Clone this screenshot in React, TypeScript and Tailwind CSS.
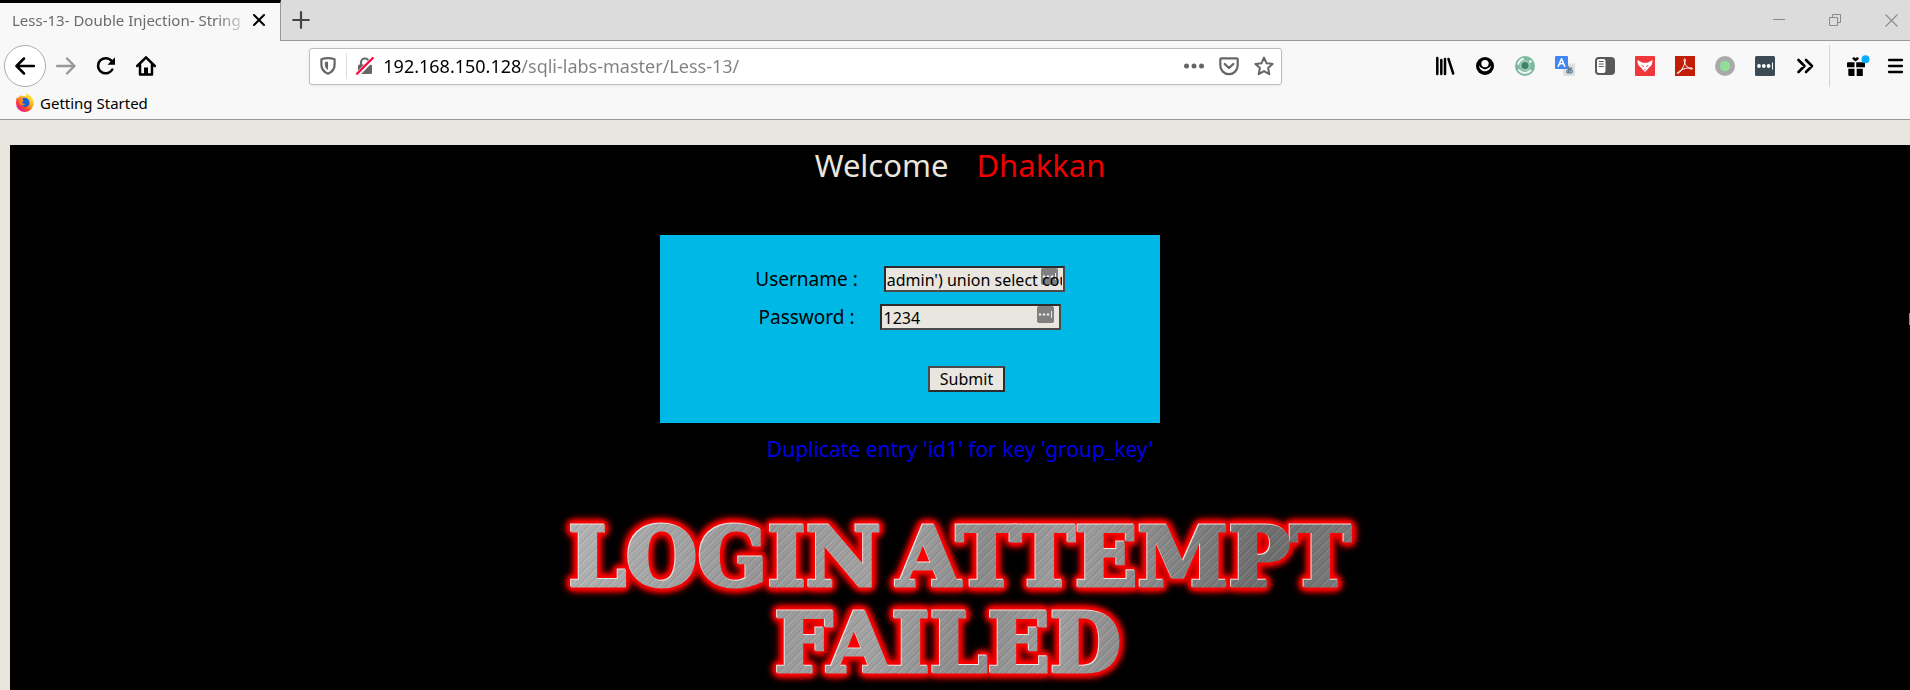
import type { ReactNode } from "react";

const ui = "font-['Noto_Sans','Open_Sans',sans-serif]";

function Icon({ children, size = 20, label }: { children: ReactNode; size?: number; label?: string }) {
  return (
    <svg
      width={size}
      height={size}
      viewBox="0 0 20 20"
      fill="none"
      strokeLinecap="round"
      strokeLinejoin="round"
      aria-label={label}
      aria-hidden={label ? undefined : true}
      className="shrink-0"
    >
      {children}
    </svg>
  );
}

function ToolButton({ label, children }: { label: string; children: ReactNode }) {
  return (
    <button type="button" aria-label={label} className="flex h-10 w-10 shrink-0 items-center justify-center">
      {children}
    </button>
  );
}

function TabStrip() {
  return (
    <div className="flex h-[41px] bg-[#dcdcdc]">
      <div className="flex w-[281px] shrink-0 items-center border-t-[3px] border-r border-t-black border-r-[#999] bg-[#f8f8f8] pb-1 pl-3">
        <span className="w-[236px] overflow-hidden text-[15px] leading-5 whitespace-nowrap text-[#6b6b6b] [mask-image:linear-gradient(to_right,black_205px,transparent_238px)]">
          Less-13- Double Injection- String
        </span>
        <button type="button" aria-label="Close tab" className="ml-[5px] flex h-5 w-3 items-center justify-center">
          <svg width="12" height="12" viewBox="0 0 12 12" stroke="#000" strokeWidth="2" strokeLinecap="round" className="shrink-0">
            <path d="M1 1l10 10M11 1L1 11" />
          </svg>
        </button>
      </div>
      <div className="flex flex-1 items-center border-b border-[#999]">
        <button type="button" aria-label="New tab" className="flex h-10 w-10 items-center justify-center">
          <svg width="18" height="18" viewBox="0 0 18 18" stroke="#444" strokeWidth="2.2" strokeLinecap="round">
            <path d="M9 1.2v15.600M1.200 9h15.600" />
          </svg>
        </button>
        <div className="ml-auto flex items-center gap-11 pr-3 text-[#8a8a8a]">
          <button type="button" aria-label="Minimize">
            <svg width="12" height="12" viewBox="0 0 12 12" stroke="currentColor">
              <path d="M0 5.500h12" />
            </svg>
          </button>
          <button type="button" aria-label="Restore">
            <svg width="12" height="12" viewBox="0 0 12 12" fill="none" stroke="currentColor">
              <path d="M.5 3.500h8v8h-8zM3.500 3.500v-3h8v8h-3" />
            </svg>
          </button>
          <button type="button" aria-label="Close">
            <svg width="13" height="13" viewBox="0 0 13 13" stroke="currentColor" strokeWidth="1.100">
              <path d="M.5.5l12 12M12.500.5l-12 12" />
            </svg>
          </button>
        </div>
      </div>
    </div>
  );
}

function AddressBar() {
  return (
    <div className="flex h-[37px] flex-[20] items-center rounded-[3px] border border-[#bdbdbd] bg-white pr-[7px] pl-2 text-[#666] shadow-[0_1px_4px_rgba(0,0,0,0.06)]">
      <Icon label="Tracking protection">
        <path d="M10 2.200c2.400 0 4.700.4 6.600 1v5.600c0 4.200-2.400 7.200-6.600 9-4.200-1.800-6.600-4.800-6.600-9V3.200c1.900-.6 4.200-1 6.600-1z" stroke="#666" strokeWidth="2.200" />
        <path d="M10 5.800v8.200c-2-1.200-3.100-2.900-3.100-5.300V6.200c1-.3 2-.4 3.100-.4z" fill="#666" />
      </Icon>
      <span className="mx-2 h-[26px] w-px bg-[#dedede]" />
      <Icon label="Connection is not secure">
        <path d="M6 9V6.500a4 4 0 0 1 8 0V9" stroke="#666" strokeWidth="2.200" />
        <rect x="3" y="8.500" width="14" height="9.500" rx="1.500" fill="#666" />
        <path d="M2.500 18.500L18.500 2" stroke="#fff" strokeWidth="4.500" />
        <path d="M2 17.800L17.800 2" stroke="#ff0039" strokeWidth="2.200" />
      </Icon>
      <input
        type="text"
        aria-label="Address"
        defaultValue="192.168.150.128/sqli-labs-master/Less-13/"
        className="ml-2 min-w-0 flex-1 bg-[linear-gradient(to_right,#000_138px,#808080_138px)] bg-clip-text text-[18px] leading-6 text-transparent caret-black outline-none"
      />
      <div className="flex items-center gap-[15px]">
        <button type="button" aria-label="Page actions">
          <Icon>
            <g fill="#666">
              <circle cx="2.500" cy="10" r="2.500" />
              <circle cx="10" cy="10" r="2.500" />
              <circle cx="17.500" cy="10" r="2.500" />
            </g>
          </Icon>
        </button>
        <button type="button" aria-label="Save to Pocket">
          <Icon>
            <path d="M2.300 2.300h15.400c.6 0 1 .4 1 1V9.500a8.700 8.700 0 0 1-17.400 0V3.300c0-.6.4-1 1-1z" stroke="#666" strokeWidth="2.200" />
            <path d="M5.700 8l4.300 4 4.300-4" stroke="#666" strokeWidth="2.300" />
          </Icon>
        </button>
        <button type="button" aria-label="Bookmark this page">
          <Icon>
            <path d="M10 1.600l2.500 5.600 6.100.7-4.500 4.100 1.200 6.200L10 15.100l-5.300 3.100L5.900 12 1.400 7.900l6.100-.7z" stroke="#666" strokeWidth="2" />
          </Icon>
        </button>
      </div>
    </div>
  );
}

function Extensions() {
  return (
    <div className="flex items-center">
      <ToolButton label="Library">
        <Icon>
          <path d="M2.300 2v16M6.300 4v14M10 3v15M13.500 3l4.700 14.500" stroke="#000" strokeWidth="2.500" />
        </Icon>
      </ToolButton>
      <ToolButton label="Account">
        <Icon>
          <circle cx="10" cy="10" r="9" fill="#000" />
          <path d="M3.900 9.200c.3 3.700 2.900 6 6.100 6s5.800-2.300 6.100-6c-.8 1.600-1.900 2.400-3 2.800a4.800 4.800 0 0 1-6.200 0c-1.100-.4-2.200-1.200-3-2.800z" fill="#f8f8f8" />
          <circle cx="10" cy="7.600" r="3.700" fill="#f8f8f8" />
        </Icon>
      </ToolButton>
      <ToolButton label="Camera">
        <Icon>
          <circle cx="10" cy="10" r="10" fill="#7cb79e" />
          <path d="M3.200 8a7 7 0 0 1 5-5M4 14a7.500 7.500 0 0 0 11.500.5" stroke="#f0f6f3" strokeWidth="2" />
          <circle cx="10" cy="9.500" r="5.500" fill="#9acbb6" />
          <circle cx="10" cy="9.500" r="3.500" fill="#42806a" />
          <circle cx="15.500" cy="5.500" r="1.200" fill="#fff" />
        </Icon>
      </ToolButton>
      <ToolButton label="Translate">
        <Icon>
          <rect x="8" y="7.500" width="12" height="12.500" rx="1" fill="#dfdfdf" />
          <path d="M11 12h6M13.300 10.300c-.2 3 0 5 .9 6.700M16.300 12.500c-1 2.500-2.600 4.500-4 4.300-1.800-.8.600-3.800 3.300-3.300 2.700.6 2.200 3-.2 3.700" stroke="#5c7a8d" strokeWidth="1.200" />
          <rect width="13" height="13" rx="1" fill="#4285f4" />
          <path d="M3.300 10.200L6.500 2.800l3.200 7.400M4.500 7.800h4" stroke="#fff" strokeWidth="1.600" />
        </Icon>
      </ToolButton>
      <ToolButton label="Reader">
        <Icon>
          <rect y="1" width="20" height="18" rx="4" fill="#58595b" />
          <rect x="2" y="3" width="8.500" height="14" rx="2" fill="#fff" />
          <path d="M4.300 5.500h4M4.300 8h4M4.300 10.500h4" stroke="#58595b" strokeWidth="1.100" />
        </Icon>
      </ToolButton>
      <ToolButton label="Fox">
        <Icon>
          <rect width="20" height="20" rx="1" fill="#ef373c" />
          <path d="M2.500 4l5 2.800h5l5-2.800c.2 3.200-.7 5.800-3.200 7.300L12 14l-2 2-2-2-2.300-2.700C3.200 9.800 2.300 7.200 2.500 4z" fill="#fff" />
          <path d="M7 9.600l1.400.7M13 9.600l-1.400.7M10 13.500v.5" stroke="#ef373c" strokeWidth="1" />
        </Icon>
      </ToolButton>
      <ToolButton label="Adobe Acrobat">
        <Icon>
          <rect width="20" height="20" fill="#c11e07" />
          <path d="M2.500 17c1.200-2.300 7-5 12-5.200 4.500 0 3.500 2 1.200 1.200C12.500 12 9.300 8 9.100 4.500c0-2.600 1.600-2.200 1.200.5C9.700 8.700 6.500 15 3.800 17c-.7.500-1.500.5-1.300 0z" stroke="#fff" strokeWidth="1" />
        </Icon>
      </ToolButton>
      <ToolButton label="Proxy">
        <Icon>
          <circle cx="10" cy="10" r="10" fill="#a9a9a9" />
          <circle cx="10" cy="10" r="5.200" fill="#94dd98" />
        </Icon>
      </ToolButton>
      <ToolButton label="Password manager">
        <Icon>
          <rect width="20" height="20" rx="1.500" fill="#3b4a54" />
          <g fill="#fff">
            <circle cx="4" cy="10" r="1.900" />
            <circle cx="8.800" cy="10" r="1.900" />
            <circle cx="13.600" cy="10" r="1.900" />
            <rect x="17" y="6.500" width="1" height="7" />
          </g>
        </Icon>
      </ToolButton>
      <ToolButton label="More tools">
        <Icon>
          <path d="M3.500 4l6 6-6 6M11 4l6 6-6 6" stroke="#000" strokeWidth="2.600" />
        </Icon>
      </ToolButton>
      <span className="ml-1 h-[42px] w-px bg-[#d4d4d4]" />
      <div className="ml-[6px] flex">
        <ToolButton label="What's new">
          <svg width="24" height="22" viewBox="0 0 24 22" className="ml-1">
            <path d="M1 8.500c0-.8.500-1.200 1.200-1.200h6.300v4.900H1zM10.200 7.300h8.300c.3 0 .5.500.5 1.200v3.700h-8.800zM2.300 13.800h6.200V21H3.700c-.8 0-1.400-.5-1.400-1.300zM10.700 13.800h6.100V21h-6.100z" fill="#000" />
            <path d="M9.600 6.500L6.700 4.200c-.8-1.500.8-2.600 2.300-1.500l.6.600.6-.6c1.500-1.100 3.100 0 2.300 1.500z" fill="#000" />
            <circle cx="19.500" cy="4.200" r="3.900" fill="#00adff" />
          </svg>
        </ToolButton>
        <button type="button" aria-label="Open menu" className="flex h-10 w-[34px] items-center justify-start pl-[9px]">
          <Icon>
            <path d="M4 4h13M4 10h13M4 16h13" stroke="#000" strokeWidth="2.300" />
          </Icon>
        </button>
      </div>
    </div>
  );
}

function NavBar() {
  return (
    <div className="flex h-[50px] items-center bg-[#f8f8f8] pl-1">
      <button type="button" aria-label="Back" className="flex h-[42px] w-[42px] shrink-0 items-center justify-center rounded-full border border-[#adadad] bg-white">
        <Icon>
          <path d="M19 10H2M9 2.500L1.500 10 9 17.500" stroke="#000" strokeWidth="2.500" />
        </Icon>
      </button>
      <ToolButton label="Forward">
        <Icon>
          <path d="M1 10h17M11 2.500l7.500 7.500-7.500 7.500" stroke="#999" strokeWidth="2.400" />
        </Icon>
      </ToolButton>
      <ToolButton label="Reload">
        <Icon>
          <path d="M16.300 13.500A7.600 7.600 0 1 1 16 5.500" stroke="#000" strokeWidth="2.500" />
          <path d="M19 1.200v7.500h-7.500z" fill="#000" />
        </Icon>
      </ToolButton>
      <ToolButton label="Home">
        <Icon>
          <path d="M1.200 10L10 1.300 18.800 10M4 9v9.500h12V9" stroke="#000" strokeWidth="2.500" />
          <path d="M8 18v-6.500h4V18z" fill="#000" />
        </Icon>
      </ToolButton>
      <span className="flex-3" />
      <AddressBar />
      <span className="flex-3" />
      <Extensions />
    </div>
  );
}

function BookmarksBar() {
  return (
    <div className="flex h-[29px] items-start border-b border-[#999] bg-[#f8f8f8] pt-[2px] pl-[15px]">
      <a href="#getting-started" className="flex items-center gap-[5px] text-[15px] leading-5 text-black">
        <svg width="20" height="20" viewBox="0 0 20 20" aria-hidden="true">
          <defs>
            <linearGradient id="flame" x1="0.85" y1="0.1" x2="0.2" y2="0.9">
              <stop offset="0" stopColor="#fff44f" />
              <stop offset="0.400" stopColor="#ffa916" />
              <stop offset="0.700" stopColor="#ff4b2b" />
              <stop offset="1" stopColor="#e31587" />
            </linearGradient>
          </defs>
          <path d="M2 4l1 1.500C3.600 4 5 2.600 6.500 2l-.2 1.500C8 2.500 10 2.800 11 3.500L11.500.5C15 1.500 18.500 5 18.800 10A8.900 8.900 0 1 1 1 10.200C.9 8 1.300 6 2 4z" fill="url(#flame)" />
          <path d="M7 5.500c3-1.700 7.200 0 7.500 4 .1 3-2.400 4.800-4.800 4.500-2-.2-3.200-1.500-3.400-2.700 1.300.6 2.600.4 3.500-.6-1.500-.3-3.300-1-3.400-2.800L8 6.700z" fill="#1560d8" />
          <path d="M3.500 6.500l3-.7 2 1.700-.3 1-1.600.6.600 1.900 2.800.2c-1 1.500-3 1.500-4.600.3z" fill="#ff8a16" />
        </svg>
        Getting Started
      </a>
    </div>
  );
}

function FieldRow({ id, label, value }: { id: string; label: string; value: string }) {
  return (
    <div className="flex items-center justify-center gap-[26px]">
      <label htmlFor={id} className="text-[19px] leading-6">
        {label}
      </label>
      <div className="relative h-[26px] w-[181px] border-2 border-t-[#2c2c2c] border-r-[#4a4a4a] border-b-[#4a4a4a] border-l-[#2c2c2c] bg-[#e9e6df]">
        <svg width="17" height="17" viewBox="0 0 17 17" aria-hidden="true" className="absolute top-0 right-[5px]">
          <rect width="17" height="17" rx="2" fill="#808080" />
          <g fill="#e8e8e8">
            <circle cx="3" cy="8.500" r="1.300" />
            <circle cx="7" cy="8.500" r="1.300" />
            <circle cx="11" cy="8.500" r="1.300" />
            <rect x="14" y="5" width="1" height="7" />
          </g>
        </svg>
        <input
          id={id}
          type="text"
          defaultValue={value}
          className="relative h-full w-full bg-transparent px-[1px] text-[16px] leading-5 text-black outline-none"
        />
      </div>
    </div>
  );
}

function LoginForm() {
  return (
    <form className="flex h-[188px] w-[500px] flex-col gap-3 bg-[#00b8e6] pt-[31px]" onSubmit={(e) => e.preventDefault()}>
      <FieldRow id="uname" label="Username :" value="admin') union select count(*)" />
      <FieldRow id="passwd" label="Password :" value="1234" />
      <button
        type="submit"
        className="mt-6 ml-[268px] h-[26px] w-[77px] border-2 border-t-[#4a4a4a] border-r-[#2c2c2c] border-b-[#2c2c2c] border-l-[#4a4a4a] bg-[#e9e6df] text-[16px] leading-5"
      >
        Submit
      </button>
    </form>
  );
}

function FailedBanner() {
  return (
    <div className="[filter:drop-shadow(-1px_-1px_0_#e8e8e8)_drop-shadow(0_0_3px_#f00)_drop-shadow(0_0_2px_#f00)_drop-shadow(0_0_1px_#f00)_drop-shadow(0_0_3px_#c00)]">
      <h2 className="bg-[repeating-linear-gradient(135deg,rgba(255,255,255,0.1)_0px,rgba(0,0,0,0.05)_2px,rgba(255,255,255,0.05)_3px,rgba(0,0,0,0.08)_5px,rgba(255,255,255,0.1)_7px),linear-gradient(100deg,#b8b8b8_0%,#989898_25%,#a4a4a4_40%,#8c8c8c_52%,#a0a0a0_62%,#6c6c6c_85%,#808080_100%)] bg-clip-text px-4 pb-1 font-['DejaVu_Serif',serif] text-[82px] leading-[86px] font-bold text-transparent [-webkit-text-stroke:3px_transparent]">
        <span className="flex justify-center gap-4">
          <span>LOGIN</span> <span>ATTEMPT</span>
        </span>
        <span className="flex justify-center pr-6">FAILED</span>
      </h2>
    </div>
  );
}

export default function App() {
  return (
    <div className={`${ui} flex min-h-screen flex-col bg-[#e9e6df]`}>
      <header>
        <TabStrip />
        <NavBar />
        <BookmarksBar />
      </header>
      <main className="relative mt-[25px] ml-[10px] flex flex-1 flex-col items-center bg-black">
        <span className="absolute top-[168px] right-0 h-3 w-px bg-[#6f8f88]" />
        <h1 className="flex gap-7 text-[31px] leading-10">
          <span className="text-[#e9e6df]">Welcome</span>
          <span className="text-[#ee0000]">Dhakkan</span>
        </h1>
        <div className="mt-[50px] pr-[100px]">
          <LoginForm />
        </div>
        <p className="mt-3 text-[21px] leading-7 text-[#0000e6]">Duplicate entry 'id1' for key 'group_key'</p>
        <div className="mt-[51px]">
          <FailedBanner />
        </div>
      </main>
    </div>
  );
}
